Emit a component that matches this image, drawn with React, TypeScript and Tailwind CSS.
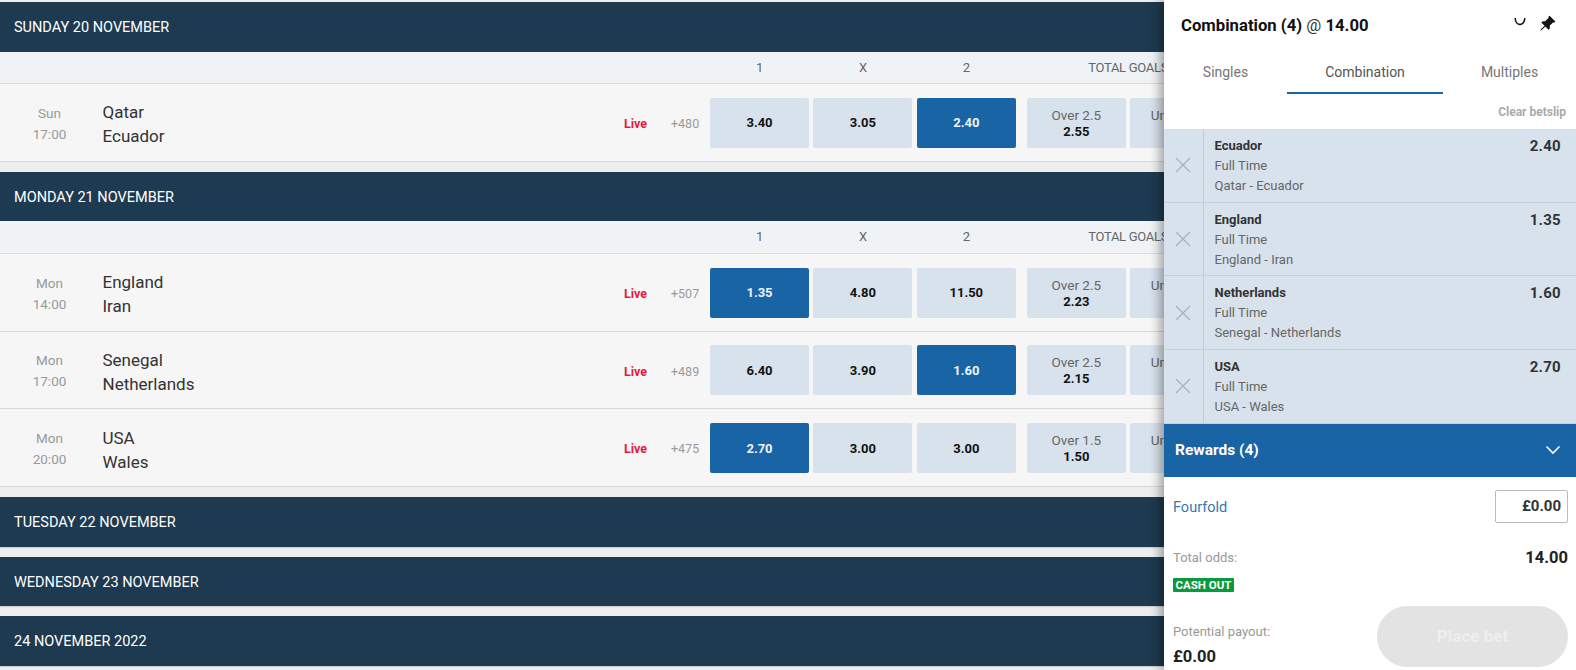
import React from "react";
import { BsPinAngleFill } from "react-icons/bs";

function Odd({ v, sel }: { v: string; sel?: boolean }) {
  return (
    <div className={"w-[99px] h-[50px] shrink-0 rounded-[2px] flex items-center justify-center text-[13px] font-bold " + (sel ? "bg-[#1864a4] text-[#eef3f8]" : "bg-[#d8e2ec] text-[#111111]")}>
      {v}
    </div>
  );
}

function Total({ label, v }: { label: string; v: string }) {
  return (
    <div className="w-[99px] h-[50px] shrink-0 rounded-[2px] bg-[#d8e2ec] flex flex-col items-center justify-center">
      <span className="text-[13.5px] leading-[17px] text-[#666666]">{label}</span>
      <span className="text-[13px] leading-[15px] font-bold text-[#111111]">{v}</span>
    </div>
  );
}

function Header({ t }: { t: string }) {
  return (
    <div className="h-[49.5px] bg-[#1e3a50] flex items-center pl-[14px] pt-[2px] text-[14.5px] text-white shrink-0 w-full shadow-[0_1px_1px_rgba(0,0,0,0.12)]">
      {t}
    </div>
  );
}

function Sub() {
  return (
    <div className="h-[32.5px] bg-[#eff3f6] border-b border-[#dcdcdc] flex items-center text-[13px] text-[#666666] pl-[710px]">
      <span className="w-[103.4px] shrink-0 pr-[4px] text-center">1</span>
      <span className="w-[103.4px] shrink-0 pr-[4px] text-center">X</span>
      <span className="w-[103.4px] shrink-0 pr-[4px] text-center">2</span>
      <span className="shrink-0 ml-[68px] whitespace-nowrap tracking-[-0.3px]">TOTAL GOALS</span>
    </div>
  );
}

type RowP = { day: string; time: string; a: string; b: string; more: string; o: [string, string, string]; sel: number; tl: string; tv: string; ul: string; uv: string };

function Row({ day, time, a, b, more, o, sel, tl, tv, ul, uv }: RowP) {
  return (
    <div className="h-[77.8px] pt-[1px] bg-[#f6f6f6] border-b border-[#d8d8d8] flex items-center">
      <div className="w-[100px] shrink-0 pr-[1px] pt-[2px] flex flex-col items-center text-[13.5px] leading-[21px] text-[#999999]">
        <span>{day}</span>
        <span>{time}</span>
      </div>
      <div className="ml-[2.5px] w-[521.5px] shrink-0 pt-[3px] flex flex-col text-[17px] leading-[24px] text-[#333333]">
        <span>{a}</span>
        <span>{b}</span>
      </div>
      <span className="w-[47px] shrink-0 pt-[3px] text-[12.5px] font-bold text-[#e8183f]">Live</span>
      <span className="w-[39px] shrink-0 pt-[3px] text-[12.5px] text-[#999999]">{more}</span>
      <div className="flex shrink-0 gap-[4.4px]">
        {o.map((x, i) => (
          <Odd key={i} v={x} sel={i === sel} />
        ))}
      </div>
      <div className="flex shrink-0 gap-[4.4px] ml-[11px]">
        <Total label={tl} v={tv} />
        <Total label={ul} v={uv} />
      </div>
    </div>
  );
}

function Bet({ name, sub, odds }: { name: string; sub: string; odds: string }) {
  return (
    <div className="h-[73.7px] flex border-b border-[#c5d0dc] bg-[#d8e2ec]">
      <div className="w-[40px] shrink-0 border-r border-[#bfcad6] flex items-center justify-center pr-[1px]">
        <svg width="16" height="16" viewBox="0 0 16 16" fill="none" stroke="#a9b1b9" strokeWidth="1.3">
          <path d="M1 1 L15 15 M15 1 L1 15" />
        </svg>
      </div>
      <div className="flex-1 pl-[10.5px] pr-[15px] pt-[7px] flex justify-between">
        <div className="flex flex-col text-[13px] leading-[20px] text-[#666666]">
          <span className="font-bold text-[#333333]">{name}</span>
          <span>Full Time</span>
          <span>{sub}</span>
        </div>
        <span className="text-[15px] leading-[20px] font-bold text-[#333333] tracking-[0.3px]">{odds}</span>
      </div>
    </div>
  );
}

export default function App() {
  return (
    <div className="h-[670px] w-full overflow-hidden flex bg-[#eeeeee] font-['Roboto',sans-serif]">
      <div className="flex-1 min-w-0 overflow-hidden pt-[2px] flex flex-col gap-[10px]">
        <div className="w-[1300px]">
          <Header t="SUNDAY 20 NOVEMBER" />
          <Sub />
          <Row day="Sun" time="17:00" a="Qatar" b="Ecuador" more="+480" o={["3.40", "3.05", "2.40"]} sel={2} tl="Over 2.5" tv="2.55" ul="Under 2.5" uv="1.48" />
        </div>
        <div className="w-[1300px]">
          <Header t="MONDAY 21 NOVEMBER" />
          <Sub />
          <Row day="Mon" time="14:00" a="England" b="Iran" more="+507" o={["1.35", "4.80", "11.50"]} sel={0} tl="Over 2.5" tv="2.23" ul="Under 2.5" uv="1.62" />
          <Row day="Mon" time="17:00" a="Senegal" b="Netherlands" more="+489" o={["6.40", "3.90", "1.60"]} sel={2} tl="Over 2.5" tv="2.15" ul="Under 2.5" uv="1.67" />
          <Row day="Mon" time="20:00" a="USA" b="Wales" more="+475" o={["2.70", "3.00", "3.00"]} sel={0} tl="Over 1.5" tv="1.50" ul="Under 1.5" uv="2.45" />
        </div>
        <div className="w-[1300px]"><Header t="TUESDAY 22 NOVEMBER" /></div>
        <div className="w-[1300px]"><Header t="WEDNESDAY 23 NOVEMBER" /></div>
        <div className="w-[1300px]"><Header t="24 NOVEMBER 2022" /></div>
      </div>

      <div className="relative z-10 w-[412px] shrink-0 bg-white flex flex-col shadow-[-4px_0_10px_rgba(0,0,0,0.35)]">
        <div className="h-[50px] flex items-center pl-[17px] pr-[20px] justify-between shrink-0">
          <span className="pt-[2px] text-[16.7px] font-bold text-[#111111]">
            Combination (4) <span className="font-normal text-[#333333]">@</span> 14.00
          </span>
          <div className="flex items-center gap-[13px] -mt-[4px]">
            <svg width="12" height="9" viewBox="0 0 12 9" fill="none" stroke="#111111" strokeWidth="1.5" className="mb-[3px]">
              <path d="M1.2 1 C 1.2 9.5, 10.8 9.5, 10.8 1" />
            </svg>
            <BsPinAngleFill size={17} color="#111111" />
          </div>
        </div>
        <div className="h-[44px] flex shrink-0 text-[14px] text-[#777777]">
          <div className="w-[123px] flex items-center justify-center">Singles</div>
          <div className="w-[156px] pt-[2px] flex items-center justify-center text-[#555555] border-b-2 border-[#1864a4]">Combination</div>
          <div className="flex-1 flex items-center justify-center">Multiples</div>
        </div>
        <div className="h-[35px] shrink-0 flex items-center justify-end pr-[10px] text-[12px] font-bold text-[#aaaaaa]">Clear betslip</div>
        <div className="shrink-0">
          <Bet name="Ecuador" sub="Qatar - Ecuador" odds="2.40" />
          <Bet name="England" sub="England - Iran" odds="1.35" />
          <Bet name="Netherlands" sub="Senegal - Netherlands" odds="1.60" />
          <Bet name="USA" sub="USA - Wales" odds="2.70" />
        </div>
        <div className="h-[53px] shrink-0 bg-[#1864a4] flex items-center justify-between pl-[11px] pr-[15px] text-white">
          <span className="text-[15.5px] font-bold">Rewards (4)</span>
          <svg width="16" height="10" viewBox="0 0 16 10" fill="none" stroke="#ffffff" strokeWidth="1.6">
            <path d="M1.5 1.5 L8 8 L14.5 1.5" />
          </svg>
        </div>
        <div className="flex items-center justify-between pl-[9px] pr-[8px] mt-[13px] shrink-0">
          <span className="pt-[4px] text-[14.5px] text-[#3479b3]">Fourfold</span>
          <div className="w-[73px] h-[33px] border border-[#bbbbbb] rounded-[2px] flex items-center justify-end pr-[6px] text-[15px] font-bold text-[#333333]">£0.00</div>
        </div>
        <div className="flex items-start justify-between pl-[9px] pr-[8px] mt-[25px] shrink-0">
          <span className="text-[13px] leading-[20px] text-[#999999]">Total odds:</span>
          <span className="text-[16.5px] leading-[20px] font-bold text-[#222222]">14.00</span>
        </div>
        <div className="flex pl-[9px] mt-[10px] shrink-0">
          <span className="bg-[#0a9a3e] text-white text-[11.5px] leading-[14px] font-bold px-[2.5px] rounded-[1px]">CASH OUT</span>
        </div>
        <div className="flex items-end justify-between pl-[9px] pr-[8px] mt-[14px] shrink-0">
          <div className="flex flex-col">
            <span className="text-[13px] leading-[20px] text-[#999999]">Potential payout:</span>
            <span className="text-[16.5px] leading-[20px] font-bold text-[#222222] mt-[5px]">£0.00</span>
          </div>
          <div className="w-[191px] h-[61px] rounded-full bg-[#e3e3e3] flex items-center justify-center pt-[1px] text-[17px] font-bold text-[#efefef]">Place bet</div>
        </div>
      </div>
    </div>
  );
}
